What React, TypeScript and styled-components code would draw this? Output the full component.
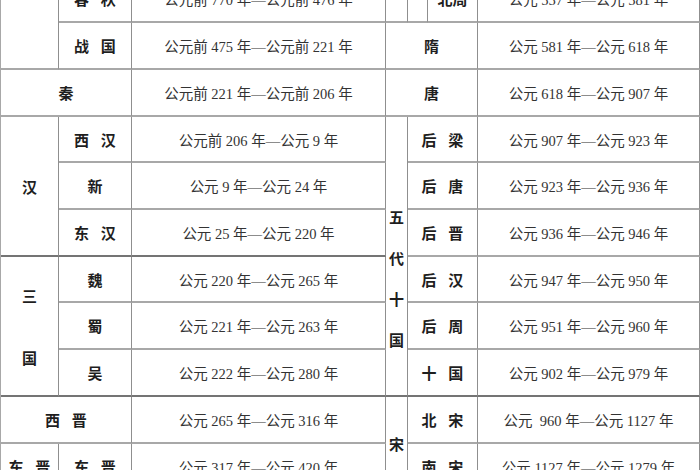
import React from 'react';
import styled, { createGlobalStyle } from 'styled-components';

const GlobalStyle = createGlobalStyle`
  html, body {
    margin: 0;
    padding: 0;
    background: #ffffff;
  }
`;

const Viewport = styled.div`
  width: 700px;
  height: 470px;
  overflow: hidden;
  background: #ffffff;
`;

// the table is cut off above the first visible row, like the screenshot
const Table = styled.div`
  display: grid;
  grid-template-columns: 58px 73px 254px 22px 20px 50px 222px;
  grid-template-rows: 47px 47px 47px 46px 47px 47px 46px 47px 47px 47px 47px;
  width: 700px;
  box-sizing: border-box;
  margin-top: -24px;
  border-left: 1px solid #a8a8a8;
  font-family: "Liberation Serif", "Noto Sans CJK SC", serif;
`;

interface CellProps {
  $col: string;
  $row: string;
  $heavy?: boolean;
}

const Cell = styled.div<CellProps>`
  grid-column: ${p => p.$col};
  grid-row: ${p => p.$row};
  display: flex;
  align-items: center;
  justify-content: center;
  box-sizing: border-box;
  min-width: 0;
  border-right: 1px solid #8f8f8f;
  border-bottom: 2px solid ${p => (p.$heavy ? '#747474' : '#a8a8a8')};
`;

const Name = styled(Cell)`
  font-size: 15px;
  font-weight: 700;
  color: #1e1e1e;
  word-spacing: 8px;
  white-space: nowrap;
`;

const Period = styled(Cell)`
  font-size: 14.5px;
  color: #333333;
  white-space: nowrap;
`;

// group names written downwards (三国, 五代十国)
const Stack = styled(Name)<{ $gap: number; $shift: number }>`
  flex-direction: column;
  gap: ${p => p.$gap}px;
  padding-top: ${p => p.$shift}px;
  line-height: 16px;
`;

const han = [
  { name: '西 汉', period: '公元前 206 年—公元 9 年' },
  { name: '新', period: '公元 9 年—公元 24 年' },
  { name: '东 汉', period: '公元 25 年—公元 220 年' },
];

const sanguo = [
  { name: '魏', period: '公元 220 年—公元 265 年' },
  { name: '蜀', period: '公元 221 年—公元 263 年' },
  { name: '吴', period: '公元 222 年—公元 280 年' },
];

const wudai = [
  { name: '后 梁', period: '公元 907 年—公元 923 年' },
  { name: '后 唐', period: '公元 923 年—公元 936 年' },
  { name: '后 晋', period: '公元 936 年—公元 946 年' },
  { name: '后 汉', period: '公元 947 年—公元 950 年' },
  { name: '后 周', period: '公元 951 年—公元 960 年' },
  { name: '十 国', period: '公元 902 年—公元 979 年' },
];

const song = [
  { name: '北 宋', period: '公元\u00a0 960 年—公元 1127 年' },
  { name: '南 宋', period: '公元 1127 年—公元 1279 年' },
];

const App: React.FC = () => {
  return (
    <Viewport>
      <GlobalStyle />
      <Table>
        {/* left half */}
        <Cell $col="1" $row="1 / span 2" />
        <Name $col="2" $row="1">春 秋</Name>
        <Period $col="3" $row="1">公元前 770 年—公元前 476 年</Period>
        <Name $col="2" $row="2">战 国</Name>
        <Period $col="3" $row="2">公元前 475 年—公元前 221 年</Period>

        <Name $col="1 / span 2" $row="3">秦</Name>
        <Period $col="3" $row="3">公元前 221 年—公元前 206 年</Period>

        <Name $col="1" $row="4 / span 3" $heavy>汉</Name>
        {han.map((item, i) => (
          <React.Fragment key={item.name}>
            <Name $col="2" $row={`${4 + i}`} $heavy={i === 2}>{item.name}</Name>
            <Period $col="3" $row={`${4 + i}`} $heavy={i === 2}>{item.period}</Period>
          </React.Fragment>
        ))}

        <Stack $col="1" $row="7 / span 3" $heavy $gap={46} $shift={4}>
          <span>三</span>
          <span>国</span>
        </Stack>
        {sanguo.map((item, i) => (
          <React.Fragment key={item.name}>
            <Name $col="2" $row={`${7 + i}`} $heavy={i === 2}>{item.name}</Name>
            <Period $col="3" $row={`${7 + i}`} $heavy={i === 2}>{item.period}</Period>
          </React.Fragment>
        ))}

        <Name $col="1 / span 2" $row="10">西 晋</Name>
        <Period $col="3" $row="10">公元 265 年—公元 316 年</Period>
        <Name $col="1" $row="11">东 晋</Name>
        <Name $col="2" $row="11">东 晋</Name>
        <Period $col="3" $row="11">公元 317 年—公元 420 年</Period>

        {/* right half */}
        <Cell $col="4" $row="1" />
        <Cell $col="5" $row="1" />
        <Name $col="6" $row="1">北周</Name>
        <Period $col="7" $row="1">公元 557 年—公元 581 年</Period>

        <Name $col="4 / span 3" $row="2">隋</Name>
        <Period $col="7" $row="2">公元 581 年—公元 618 年</Period>
        <Name $col="4 / span 3" $row="3">唐</Name>
        <Period $col="7" $row="3">公元 618 年—公元 907 年</Period>

        <Stack $col="4" $row="4 / span 6" $heavy $gap={25} $shift={46}>
          <span>五</span>
          <span>代</span>
          <span>十</span>
          <span>国</span>
        </Stack>
        {wudai.map((item, i) => (
          <React.Fragment key={item.name}>
            <Name $col="5 / span 2" $row={`${4 + i}`} $heavy={i === 5}>{item.name}</Name>
            <Period $col="7" $row={`${4 + i}`} $heavy={i === 5}>{item.period}</Period>
          </React.Fragment>
        ))}

        <Name $col="4" $row="10 / span 2">宋</Name>
        {song.map((item, i) => (
          <React.Fragment key={item.name}>
            <Name $col="5 / span 2" $row={`${10 + i}`}>{item.name}</Name>
            <Period $col="7" $row={`${10 + i}`}>{item.period}</Period>
          </React.Fragment>
        ))}
      </Table>
    </Viewport>
  );
};

export default App;
